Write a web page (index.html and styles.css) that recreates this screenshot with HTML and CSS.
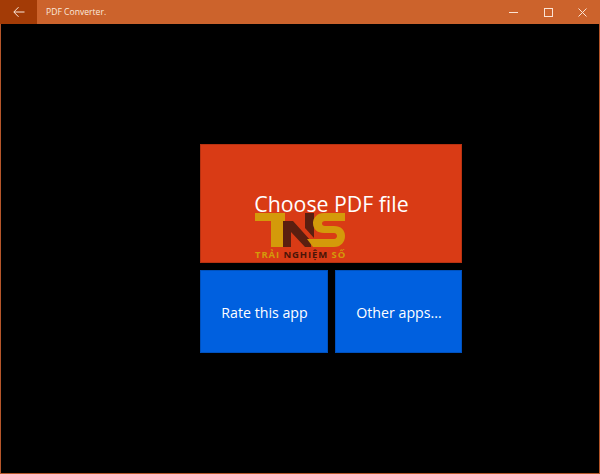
FILE: index.html
```html
<!DOCTYPE html>
<html lang="en">
<head>
<meta charset="utf-8">
<title>PDF Converter.</title>
<link rel="stylesheet" href="styles.css">
</head>
<body>
<div class="window">
  <header class="titlebar">
    <div class="back">
      <svg width="12" height="12" viewBox="0 0 12 12"><path d="M11.5 6H1M5.5 1.2 .8 6l4.700 4.800" fill="none" stroke="#fbe9dd" stroke-width="1"/></svg>
    </div>
    <div class="title">PDF Converter.</div>
    <div class="controls">
      <div class="ctl"><svg width="9" height="9" viewBox="0 0 9 9"><path d="M0 4.500h9" stroke="#fbe3d4" stroke-width="1"/></svg></div>
      <div class="ctl"><svg width="9" height="9" viewBox="0 0 9 9"><rect x=".5" y=".5" width="8" height="8" fill="none" stroke="#fbe3d4" stroke-width="1"/></svg></div>
      <div class="ctl"><svg width="9" height="9" viewBox="0 0 9 9"><path d="M.5.5l8 8M8.500.5l-8 8" stroke="#fbe3d4" stroke-width="1"/></svg></div>
    </div>
  </header>
  <main class="content">
    <div class="tiles">
      <div class="tile tile-main">Choose PDF file</div>
      <div class="tile tile-small">Rate this app</div>
      <div class="tile tile-small">Other apps...</div>
      <div class="logo">
        <svg class="logo-mark" width="90" height="34" viewBox="0 0 90 34">
          <polygon points="0,0 30,0 30,8 28,8 28,34 16,34 16,8 0,8" fill="#d49a0a"/>
          <polygon points="28,8 38,8 56,28 56,34 50,34 36,19 36,34 28,34" fill="#5a1f10"/>
          <polygon points="50,0 59,0 59,25 50,15" fill="#5a1f10"/>
          <path d="M90 0H69C62 0 58 5 58 10C58 16 62 20 69 20H79C83 20 83 26 79 26H52L58 34H79C86 34 90 29 90 23C90 17 86 13 79 13H70C66 13 66 8 70 8H90Z" fill="#d49a0a"/>
        </svg>
        <div class="logo-text"><span class="gold">TRẢI</span> <span class="dark">NGHIỆM</span> <span class="gold">SỐ</span></div>
      </div>
    </div>
  </main>
</div>
</body>
</html>
```
FILE: styles.css
```css
* { box-sizing: border-box; }
html, body { margin: 0; padding: 0; height: 100%; background: #000; }
.window {
  width: 600px;
  height: 474px;
  display: flex;
  flex-direction: column;
  border: 1px solid #b5562a;
  border-top: 0;
  font-family: "Open Sans", "Noto Sans", sans-serif;
  color: #fff;
}
.titlebar {
  height: 24px;
  flex: none;
  display: flex;
  align-items: center;
  background: #cc632c;
  margin: 0 -1px;
}
.back {
  width: 37px;
  height: 24px;
  display: flex;
  align-items: center;
  justify-content: center;
  background: #a33b06;
}
.title {
  flex: 1;
  padding-left: 9px;
  font-size: 8.600px;
  color: #fbe9dd;
}
.controls { display: flex; }
.ctl {
  width: 34.500px;
  height: 24px;
  display: flex;
  align-items: center;
  justify-content: center;
}
.content {
  flex: 1;
  padding: 120px 0 0 199px;
}
.tiles {
  position: relative;
  width: 262px;
  display: grid;
  grid-template-columns: 128px 127px;
  grid-template-rows: 119px 83px;
  gap: 7px;
}
.tile {
  display: flex;
  align-items: center;
  justify-content: center;
  border: 1px solid rgba(0, 0, 0, .15);
}
.tile-main {
  grid-column: 1 / 3;
  background: #d93b15;
  font-size: 21.300px;
  padding-left: 1px;
}
.tile-small {
  background: #0060df;
  font-size: 14.200px;
  padding: 2px 0 0 1px;
}
.logo {
  position: absolute;
  left: 55px;
  top: 69px;
  width: 92px;
}
.logo-mark { display: block; }
.logo-text {
  margin-top: 2px;
  font-size: 9.500px;
  font-weight: 700;
  letter-spacing: .9px;
  white-space: nowrap;
  line-height: 11px;
}
.gold { color: #d49a0a; }
.dark { color: #4a1508; }
```
